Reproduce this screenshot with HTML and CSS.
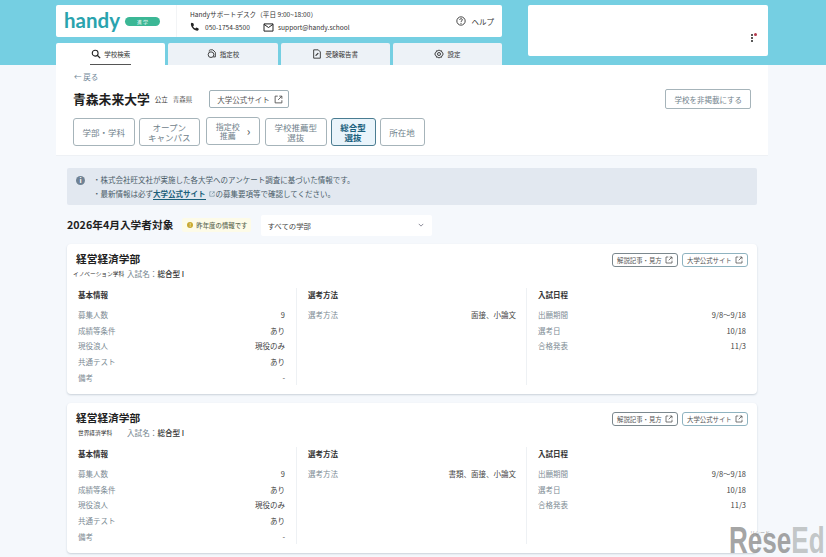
FILE: index.html
```html
<!DOCTYPE html>
<html lang="ja">
<head>
<meta charset="utf-8">
<title>青森未来大学</title>
<link rel="stylesheet" href="styles.css">
</head>
<body>
<svg width="0" height="0" class="defs">
  <symbol id="ext" viewBox="0 0 12 12"><path d="M5 1.500H1.500v9h9V7M7 1.500h3.500V5M10.500 1.500L5.500 6.500" fill="none" stroke="currentColor" stroke-width="1.200"/></symbol>
</svg>
<header class="band">
  <div class="band-left">
    <div class="topcard">
      <div class="logo"><span class="logo-word">handy</span><span class="logo-tag">進 学</span></div>
      <div class="support">
        <div class="support-title">Handyサポートデスク（平日 9:00~18:00）</div>
        <div class="support-row">
          <svg class="ic-phone" viewBox="0 0 12 12"><path d="M2 1l2 .5.8 2.500-1.200 1c.6 1.300 1.500 2.200 2.800 2.800l1-1.200 2.600.8.5 2c-.3.6-1 1-1.600 1C4.700 10.400 1.300 6.500 1 2.500 1 1.900 1.500 1.200 2 1z" fill="#222"/></svg>
          <span class="support-tel">050-1754-8500</span>
          <svg class="ic-mail" viewBox="0 0 12 10"><path d="M1 1h10v8H1zM1 1.500l5 3.500 5-3.500" fill="none" stroke="#222" stroke-width="1.100"/></svg>
          <span>support@handy.school</span>
        </div>
      </div>
      <div class="help">
        <svg class="ic-help" viewBox="0 0 12 12"><circle cx="6" cy="6" r="5" fill="none" stroke="#222" stroke-width="1"/><path d="M4.500 4.700c0-2 3.100-2 3.100-.1 0 1.200-1.600 1.200-1.600 2.500" fill="none" stroke="#222" stroke-width="1"/><circle cx="6" cy="8.700" r=".7" fill="#222"/></svg>
        <span>ヘルプ</span>
      </div>
    </div>
    <nav class="tabs">
      <div class="tab tab-active"><span class="tab-inner">
        <svg class="ic-tab" viewBox="0 0 12 12"><circle cx="5" cy="5" r="3.500" fill="none" stroke="#222" stroke-width="1.300"/><path d="M7.500 7.500L11 11" stroke="#222" stroke-width="1.500"/></svg>学校検索</span></div>
      <div class="tab"><span class="tab-inner">
        <svg class="ic-tab" viewBox="0 0 12 12"><path d="M4 1h3l3 3v5.500H7.500M4 1C3 1 2.700 1.700 2.700 3" fill="none" stroke="#333" stroke-width="1.100"/><circle cx="4.800" cy="6.800" r="3.400" fill="none" stroke="#333" stroke-width="1.100"/></svg>指定校</span></div>
      <div class="tab"><span class="tab-inner">
        <svg class="ic-tab" viewBox="0 0 12 12"><path d="M2 1h5.500L10 3.500V11H2z" fill="none" stroke="#333" stroke-width="1.100"/><path d="M4 8.500l.3-1.300L7 4.500l1 1-2.700 2.700z" fill="#333"/></svg>受験報告書</span></div>
      <div class="tab"><span class="tab-inner">
        <svg class="ic-tab" viewBox="0 0 12 12"><path d="M6 1l1.200 1.300 1.800-.2.3 1.700L11 5l-.8 1 .8 1-1.700 1.200-.3 1.700-1.800-.2L6 11 4.800 9.700 3 9.900l-.3-1.700L1 7l.8-1L1 5l1.700-1.200.3-1.700 1.800.2z" fill="none" stroke="#333" stroke-width="1.100"/><circle cx="6" cy="6" r="1.800" fill="none" stroke="#333" stroke-width="1.100"/></svg>設定</span></div>
    </nav>
  </div>
  <div class="adcard"><span class="dots"><i></i><i></i><i></i><b></b></span></div>
</header>

<section class="school">
  <a class="back">← 戻る</a>
  <div class="school-head">
    <h1>青森未来大学</h1>
    <span class="meta meta-type">公立</span>
    <span class="meta">青森県</span>
    <a class="site-btn">大学公式サイト<svg class="ic-ext"><use href="#ext"/></svg></a>
    <a class="hide-btn">学校を非掲載にする</a>
  </div>
  <div class="filters">
    <a class="fbtn f62"><span>学部・学科</span></a>
    <a class="fbtn f62"><span>オープン<br>キャンパス</span></a>
    <a class="fbtn f55"><span>指定校<br>推薦</span><span class="chev">›</span></a>
    <a class="fbtn f62"><span>学校推薦型<br>選抜</span></a>
    <a class="fbtn f45 on"><span>総合型<br>選抜</span></a>
    <a class="fbtn f45"><span>所在地</span></a>
  </div>
</section>

<main class="content">
  <div class="notice">
    <span class="notice-ic">i</span>
    <div>
      <p>・株式会社旺文社が実施した各大学へのアンケート調査に基づいた情報です。</p>
      <p>・最新情報は必ず<a class="notice-link">大学公式サイト</a><svg class="ic-ext-s"><use href="#ext"/></svg>の募集要項等で確認してください。</p>
    </div>
  </div>

  <div class="year-row">
    <h2>2026年4月入学者対象</h2>
    <span class="lastyear"><i>!</i>昨年度の情報です</span>
    <div class="select">すべての学部<svg class="ic-chev" viewBox="0 0 8 5"><path d="M1 1l3 3 3-3" fill="none" stroke="#667" stroke-width="1"/></svg></div>
  </div>

  <article class="card">
    <div class="card-top">
      <div>
        <h3>経営経済学部</h3>
        <div class="sub"><span class="dept">イノベーション学科</span><span class="exam">入試名：<b>総合型 I</b></span></div>
      </div>
      <div class="card-btns">
        <a class="mini">解説記事・見方<svg class="ic-ext-m"><use href="#ext"/></svg></a>
        <a class="mini mini-blue">大学公式サイト<svg class="ic-ext-m"><use href="#ext"/></svg></a>
      </div>
    </div>
    <div class="cols">
      <div class="col">
        <h4>基本情報</h4>
        <dl>
          <div><dt>募集人数</dt><dd>9</dd></div>
          <div><dt>成績等条件</dt><dd>あり</dd></div>
          <div><dt>現役浪人</dt><dd>現役のみ</dd></div>
          <div><dt>共通テスト</dt><dd>あり</dd></div>
          <div><dt>備考</dt><dd>-</dd></div>
        </dl>
      </div>
      <div class="col">
        <h4>選考方法</h4>
        <dl><div><dt>選考方法</dt><dd>面接、小論文</dd></div></dl>
      </div>
      <div class="col">
        <h4>入試日程</h4>
        <dl>
          <div><dt>出願期間</dt><dd>9/8～9/18</dd></div>
          <div><dt>選考日</dt><dd>10/18</dd></div>
          <div><dt>合格発表</dt><dd>11/3</dd></div>
        </dl>
      </div>
    </div>
  </article>

  <article class="card">
    <div class="card-top">
      <div>
        <h3>経営経済学部</h3>
        <div class="sub"><span class="dept dept-b">世界経済学科</span><span class="exam">入試名：<b>総合型 I</b></span></div>
      </div>
      <div class="card-btns">
        <a class="mini">解説記事・見方<svg class="ic-ext-m"><use href="#ext"/></svg></a>
        <a class="mini mini-blue">大学公式サイト<svg class="ic-ext-m"><use href="#ext"/></svg></a>
      </div>
    </div>
    <div class="cols">
      <div class="col">
        <h4>基本情報</h4>
        <dl>
          <div><dt>募集人数</dt><dd>9</dd></div>
          <div><dt>成績等条件</dt><dd>あり</dd></div>
          <div><dt>現役浪人</dt><dd>現役のみ</dd></div>
          <div><dt>共通テスト</dt><dd>あり</dd></div>
          <div><dt>備考</dt><dd>-</dd></div>
        </dl>
      </div>
      <div class="col">
        <h4>選考方法</h4>
        <dl><div><dt>選考方法</dt><dd>書類、面接、小論文</dd></div></dl>
      </div>
      <div class="col">
        <h4>入試日程</h4>
        <dl>
          <div><dt>出願期間</dt><dd>9/8～9/18</dd></div>
          <div><dt>選考日</dt><dd>10/18</dd></div>
          <div><dt>合格発表</dt><dd>11/3</dd></div>
        </dl>
      </div>
    </div>
  </article>
</main>

<div class="watermark"><span class="wm-kana">リシード</span><span class="wm-text"><span class="wm-a">Rese</span><span class="wm-b">Ed</span></span></div>
</body>
</html>
```

FILE: styles.css
```css
* { box-sizing: border-box; }
html, body { margin: 0; height: 557px; overflow: hidden; }
body {
  position: relative;
  background: #f5f8fc;
  color: #222;
  font-family: "Noto Sans CJK JP", "Noto Sans", sans-serif;
  font-size: 8px;
}
.defs { position: absolute; }
h1, h2, h3, h4, p, dl, dd { margin: 0; }

.band {
  height: 65px;
  background: #75cfe2;
  padding: 5px 58px 0 56px;
  display: flex;
  gap: 26px;
  align-items: flex-start;
}
.band-left { width: 446px; }
.topcard {
  height: 32px;
  background: #fff;
  border-radius: 2px;
  display: flex;
  align-items: center;
  padding: 0 8px;
}
.logo {
  width: 113px;
  height: 32px;
  display: flex;
  align-items: center;
  gap: 5px;
  border-right: 1px solid #f2f4f6;
  margin-right: 13px;
}
.logo-word {
  font-family: "Lato", sans-serif;
  font-size: 20.500px;
  font-weight: 700;
  line-height: 32px;
  color: #2aa3ae;
  margin-top: -3px;
}
.logo-tag {
  width: 35px;
  height: 9px;
  border-radius: 5px;
  background: #3bb795;
  color: #fff;
  font-size: 5px;
  line-height: 9px;
  text-align: center;
}
.support { flex: 1; font-size: 6.600px; color: #333; line-height: 10px; }
.support-title { margin-bottom: 2px; }
.support-row { display: flex; align-items: center; height: 12px; }
.ic-phone { width: 10px; height: 10px; margin-right: 5px; }
.support-tel { width: 58px; }
.ic-mail { width: 11px; height: 9px; margin-right: 4px; }
.help { display: flex; align-items: center; gap: 6px; font-size: 7.500px; color: #333; }
.ic-help { width: 10px; height: 10px; }

.tabs { display: flex; gap: 3px; margin-top: 6px; }
.tab {
  flex: 1;
  height: 22px;
  background: #edf2f7;
  border-radius: 2px 2px 0 0;
  display: flex;
  justify-content: center;
  font-size: 6.500px;
  color: #333;
}
.tab-inner { display: flex; align-items: center; gap: 3px; height: 22px; padding: 0 1px; }
.tab-active { background: #fff; }
.tab-active .tab-inner { border-bottom: 1px solid #555; }
.ic-tab { width: 10px; height: 10px; }

.adcard {
  width: 240px;
  height: 51px;
  background: #fff;
  border-radius: 2px;
  position: relative;
}
.dots { position: absolute; left: 223px; top: 29px; width: 8px; height: 12px; }
.dots i { display: block; width: 2px; height: 2px; background: #222; margin-bottom: 1px; border-radius: 50%; }
.dots b { position: absolute; left: 3px; top: -1px; width: 3px; height: 3px; background: #b5394c; border-radius: 50%; }

.school {
  margin: 0 58px 0 56px;
  height: 91px;
  background: #fff;
  border-bottom: 1px solid #eef1f5;
  padding: 6px 17px 0;
}
.back { display: block; font-size: 7.500px; line-height: 11px; color: #6f8696; padding-left: 1px; }
.school-head { display: flex; align-items: center; height: 20px; margin-top: 7px; }
h1 { font-size: 12.800px; line-height: 20px; font-weight: 700; color: #1e1e1e; margin-right: 5px; }
.meta { font-size: 6.500px; color: #666; }
.meta-type { margin-right: 5px; color: #333; }
.site-btn {
  display: flex; align-items: center; gap: 4px;
  height: 18px; padding: 0 5px 0 7px;
  margin-left: 17px;
  border: 1px solid #9fb0b7; border-radius: 2px;
  font-size: 7.500px; color: #555;
}
.ic-ext { width: 9px; height: 9px; color: #555; }
.hide-btn {
  margin-left: auto;
  height: 20px; padding: 0 8px;
  display: flex; align-items: center;
  border: 1px solid #a6b4ba; border-radius: 2px;
  font-size: 7.500px; color: #71828c;
}
.filters { display: flex; gap: 4px; margin-top: 9px; align-items: flex-start; }
.fbtn {
  height: 28px;
  border: 1px solid #a6b4ba; border-radius: 3px;
  display: flex; align-items: center; justify-content: center;
  text-align: center;
  font-size: 8.500px; line-height: 10px;
  color: #71828c;
  flex: none;
}
.f62 { width: 61.500px; }
.f55 {
  width: 54px;
  margin: -1px 1px 0 2px;
  gap: 7px;
  font-size: 8px; line-height: 9px;
}
.f45 { width: 45px; }
.chev { font-size: 12px; line-height: 12px; color: #555; }
.on { border-color: #4a7c91; background: #e9f4fb; color: #19607d; font-weight: 700; }

.content { padding: 12px 69px 0 67px; }
.notice {
  height: 37px;
  background: #e2e8f0;
  border-radius: 2px;
  display: flex;
  padding: 5px 0 0 9px;
  gap: 8px;
  font-size: 7.500px;
  line-height: 13.500px;
  color: #4a5c68;
}
.notice-ic {
  width: 9px; height: 9px; margin-top: 3px;
  border-radius: 50%;
  background: #6f8294; color: #fff;
  font-size: 7px; line-height: 9px; text-align: center; font-weight: 700;
}
.notice-link { color: #1a5f7a; font-weight: 700; border-bottom: 1px solid #1a5f7a; }
.ic-ext-s { width: 6px; height: 6px; margin: 0 1px 0 3px; color: #6a8a98; }

.year-row { display: flex; align-items: center; height: 22px; margin-top: 9px; }
h2 { font-size: 10.700px; font-weight: 700; color: #1e1e1e; line-height: 22px; }
.lastyear {
  display: flex; align-items: center; gap: 3px;
  height: 14px; margin-left: 9px; padding: 0 4px 0 5px;
  background: #fdfbe8; border-radius: 2px;
  font-size: 6.400px; font-weight: 500; color: #5f6b55;
}
.lastyear i {
  width: 6px; height: 6px; border-radius: 50%;
  background: #c9a92f; color: #fff; font-size: 5px; line-height: 6px; text-align: center; font-style: normal;
}
.select {
  width: 171px; height: 21px; margin-left: 10px;
  background: #fff; border-radius: 2px;
  display: flex; align-items: center; justify-content: space-between;
  padding: 0 8px 0 6px;
  font-size: 7.400px; color: #444;
}
.ic-chev { width: 6px; height: 4px; }

.card {
  height: 150px;
  margin-top: 8px;
  background: #fff;
  border-radius: 4px;
  box-shadow: 0 1px 2px rgba(90, 110, 130, 0.28);
  padding: 7px 9px 0;
}
.card + .card { margin-top: 9px; }
.card-top { display: flex; justify-content: space-between; height: 30px; }
h3 { font-size: 10.700px; line-height: 15px; font-weight: 700; color: #1e1e1e; }
.sub { display: flex; align-items: center; height: 15px; margin-left: -3px; font-size: 7.600px; color: #71828c; }
.dept { width: 54px; font-size: 5.700px; color: #333; }
.dept-b { padding-left: 5px; }
.exam b { font-weight: 500; color: #333; }
.card-btns { display: flex; gap: 4px; padding: 2px 0 0; }
.mini {
  width: 66px;
  height: 14px; padding: 0 4px;
  display: flex; align-items: center; justify-content: space-between;
  border: 1px solid #7b888e; border-radius: 3px;
  font-size: 6.400px; color: #555;
}
.mini-blue { border-color: #8fb3c0; }
.ic-ext-m { width: 8px; height: 8px; color: #555; }

.cols { display: grid; grid-template-columns: 221px 230px 1fr; margin-top: 7px; }
.col { height: 97px; padding: 1px 11px 0 2px; border-right: 1px solid #eef1f4; }
.col + .col { padding-left: 11px; padding-right: 10px; }
.col:last-child { border-right: 0; padding-right: 2px; }
h4 { font-size: 7.500px; font-weight: 700; line-height: 12px; color: #333; margin-bottom: 6px; }
dl > div { display: flex; justify-content: space-between; height: 15.700px; font-size: 7.500px; line-height: 15.700px; }
dt { color: #7d8b94; }
dd { color: #444; }

.watermark {
  position: absolute;
  left: 729px;
  top: 525px;
  width: 97px;
  height: 32px;
  font-family: "Liberation Sans", sans-serif;
  font-weight: 700;
  font-size: 37px;
  line-height: 32px;
  white-space: nowrap;
}
.wm-text { display: block; transform: scaleX(0.705); transform-origin: left top; }
.wm-a { color: rgba(135, 135, 135, 0.75); }
.wm-b { color: rgba(165, 170, 170, 0.65); }
.wm-kana {
  position: absolute; left: 21px; top: 4px;
  font-size: 5px; line-height: 6px; font-weight: 400;
  color: #9a9a9a;
  font-family: "Noto Sans CJK JP", sans-serif;
}
```
